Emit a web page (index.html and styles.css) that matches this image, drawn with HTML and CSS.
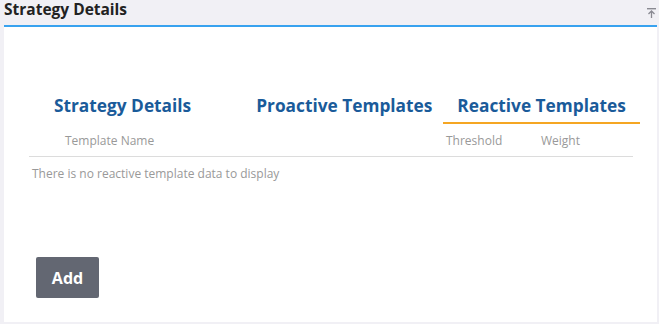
FILE: index.html
```html
<!DOCTYPE html>
<html>
<head>
<meta charset="utf-8">
<link rel="stylesheet" href="styles.css">
</head>
<body>
<div class="page">
  <div class="titlebar">
    <h1 class="title">Strategy Details</h1>
    <svg class="pin" width="9" height="10" viewBox="0 0 9 10">
      <rect x="0" y="0" width="9" height="1.4" fill="#8a8a92"/>
      <path d="M4.5 3 L4.5 10 M1.5 6 L4.5 3 L7.5 6" stroke="#8a8a92" stroke-width="1.3" fill="none"/>
    </svg>
  </div>
  <div class="panel">
    <div class="tabs">
      <div class="tab tab1">Strategy Details</div>
      <div class="tab tab2">Proactive Templates</div>
      <div class="tab tab3 active">Reactive Templates</div>
    </div>
    <div class="table">
      <div class="thead">
        <div class="th name">Template Name</div>
        <div class="th threshold">Threshold</div>
        <div class="th weight">Weight</div>
      </div>
      <div class="empty">There is no reactive template data to display</div>
    </div>
    <button class="add">Add</button>
  </div>
</div>
</body>
</html>
```
FILE: styles.css
```css
* { box-sizing: border-box; }
html, body { margin: 0; padding: 0; }
body {
  background: #f1f0f5;
  font-family: "Open Sans", "Noto Sans", sans-serif;
  width: 659px;
  height: 324px;
  overflow: hidden;
}
.page { padding: 0 2px 0 4px; }
.titlebar {
  display: flex;
  align-items: flex-start;
  justify-content: space-between;
  height: 25px;
}
.title {
  margin: 0;
  font-size: 15.5px;
  font-weight: 700;
  color: #222;
  line-height: 19px;
}
.pin { margin-top: 8px; margin-right: 1px; }
.panel {
  background: #fff;
  border-top: 2px solid #38a2ef;
  height: 297px;
  padding: 0 24px 0 25px;
}
.tabs {
  display: flex;
  margin-top: 65px;
  height: 32px;
}
.tab {
  font-size: 17.3px;
  font-weight: 700;
  color: #1a5b9a;
  line-height: 24px;
  padding: 2px 14px 0;
  border-bottom: 2px solid transparent;
  white-space: nowrap;
}
.tab1 { margin-left: 11px; }
.tab2 { margin-left: 37px; }
.tab3 { margin-left: -3px; }
.tab.active { border-bottom-color: #f5a623; }
.table { width: 604px; }
.thead {
  display: flex;
  height: 33px;
  padding-top: 9px;
  line-height: 16px;
  border-bottom: 1px solid #dcdcdc;
  font-size: 12px;
  color: #999;
}
.th { white-space: nowrap; }
.name { padding-left: 36px; width: 417px; }
.threshold { width: 95px; }
.empty {
  font-size: 12px;
  color: #999;
  padding: 8px 0 0 3px;
  line-height: 18px;
}
.add {
  margin: 74px 0 0 7px;
  width: 63px;
  height: 41px;
  background: #636772;
  border: none;
  border-radius: 2px;
  color: #fff;
  font-family: "Open Sans", sans-serif;
  font-weight: 700;
  font-size: 16px;
  padding: 0;
}
```
